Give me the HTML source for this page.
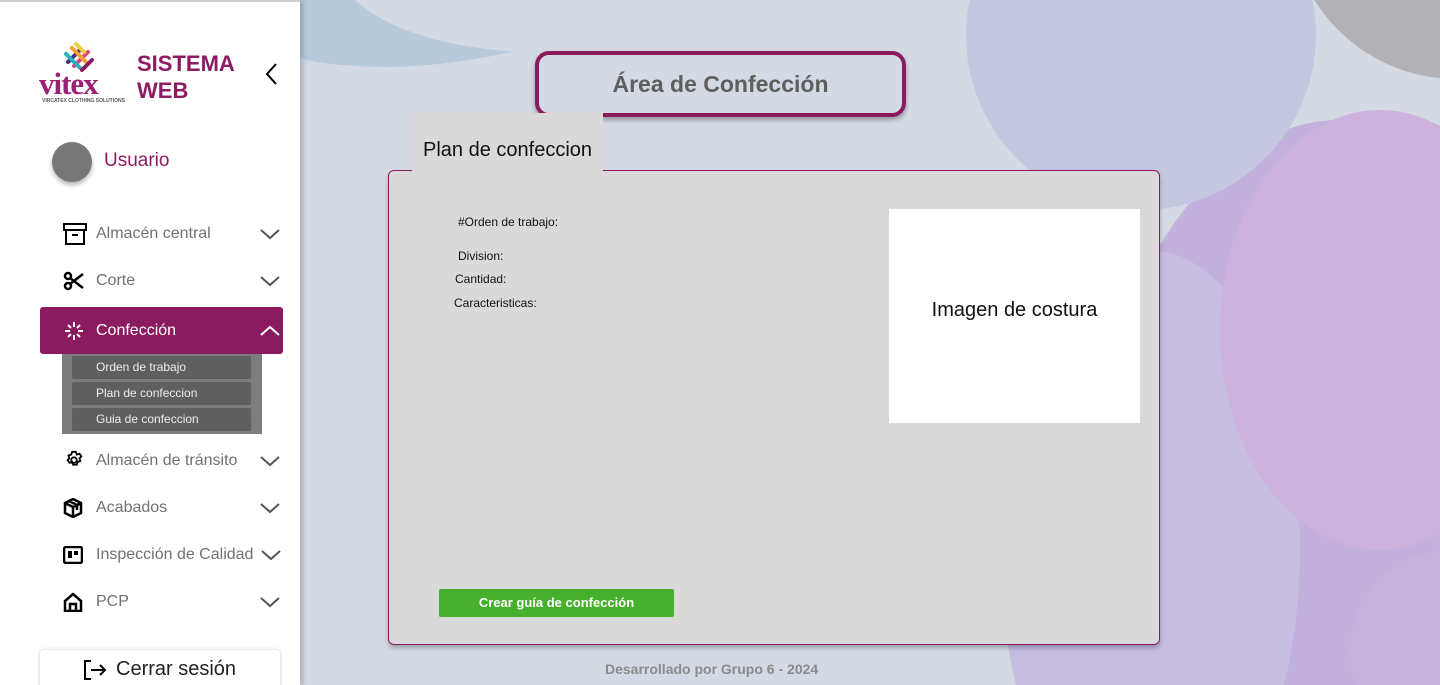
<!DOCTYPE html>
<html><head><meta charset="utf-8"><style>
*{margin:0;padding:0;box-sizing:border-box}
html,body{width:1440px;height:685px;overflow:hidden}
body{position:relative;font-family:"Liberation Sans",sans-serif;background:#d3dae3}
.bg{position:absolute;inset:0;overflow:hidden}
.b{position:absolute;border-radius:50%}
.side{position:absolute;left:0;top:0;width:300px;height:685px;background:#fff;border-top:2px solid #cfcfcf;box-shadow:2px 0 6px rgba(0,0,0,.25);z-index:5;overflow:hidden}
.item{position:absolute;left:40px;width:243px;height:47px;display:flex;align-items:center;color:#707070;font-size:16px}
.item svg.ic{position:absolute;left:23px}
.item span{position:absolute;left:56px}
.item .ch{position:absolute;left:220px}
.sub{position:absolute;left:62px;top:352px;width:200px;height:80px;background:#7d7d7d}
.sub div{position:absolute;left:10px;width:179px;height:23px;background:#5f5f5f;color:#eee;font-size:12px;line-height:23px;padding-left:24px;border-radius:2px}
</style></head><body>
<div class="bg">
<div class="b" style="left:200px;top:-170px;width:520px;height:230px;background:#b7cadc;transform:rotate(-10deg)"></div>
<div class="b" style="left:330px;top:-190px;width:520px;height:240px;background:#d3dae3;transform:rotate(-6deg)"></div>
<div class="b" style="left:1080px;top:120px;width:520px;height:900px;background:#c2b0de"></div>
<div class="b" style="left:1000px;top:250px;width:300px;height:600px;background:#c6bde0"></div>
<div class="b" style="left:966px;top:-140px;width:350px;height:350px;background:#c5c6e0"></div>
<div class="b" style="left:1290px;top:-250px;width:320px;height:330px;background:#b2b2b6;transform:rotate(-30deg)"></div>
<div class="b" style="left:1220px;top:110px;width:320px;height:440px;background:#cdb2dd"></div>
<div class="b" style="left:1350px;top:550px;width:200px;height:200px;background:#c4b4dc"></div>
</div>

<div class="side">
<svg style="position:absolute;left:62px;top:40px" width="34" height="32" viewBox="0 0 34 32">
<g stroke-width="4" stroke-linecap="round">
<line x1="6" y1="20" x2="18" y2="8" stroke="#4a2a7a"/><line x1="12" y1="24" x2="26" y2="10" stroke="#e0457b"/>
<line x1="10" y1="6" x2="26" y2="22" stroke="#f0a030"/><line x1="4" y1="12" x2="18" y2="26" stroke="#2ab0c0"/>
<line x1="14" y1="2" x2="22" y2="10" stroke="#e8d040"/><line x1="20" y1="28" x2="30" y2="18" stroke="#8a1a5e"/>
</g></svg>
<div style="position:absolute;left:39px;top:64px;font-family:'Liberation Serif',serif;font-weight:bold;font-size:31px;color:#9b1f73;letter-spacing:-1px">vitex</div>
<div style="position:absolute;left:42px;top:96px;font-size:5px;color:#555;font-weight:bold">VIRCATEX CLOTHING SOLUTIONS</div>
<div style="position:absolute;left:137px;top:48px;font-size:22px;font-weight:bold;color:#8c1b62;line-height:27px">SISTEMA<br>WEB</div>
<svg style="position:absolute;left:264px;top:60px" width="14" height="24"><path d="M12 2 L3 12 L12 22" fill="none" stroke="#000" stroke-width="2"/></svg>
<div style="position:absolute;left:52px;top:140px;width:40px;height:40px;border-radius:50%;background:#777;box-shadow:0 3px 5px rgba(0,0,0,.3)"></div>
<div style="position:absolute;left:104px;top:148px;font-size:19px;color:#8c1b62">Usuario</div>

<div class="item" style="top:208px"><svg class="ic" width="24" height="22" viewBox="0 0 24 22"><rect x="1" y="1" width="22" height="6" fill="none" stroke="#000" stroke-width="2"/><path d="M3 7v14h18V7M9 12h6" fill="none" stroke="#000" stroke-width="2"/></svg><span>Almacén central</span><svg class="ch" width="20" height="12"><path d="M1 2l9 8 9-8" fill="none" stroke="#555" stroke-width="2"/></svg></div>
<div class="item" style="top:255px"><svg class="ic" width="22" height="20" viewBox="0 0 22 20"><circle cx="5" cy="5" r="3" fill="none" stroke="#000" stroke-width="2.5"/><circle cx="5" cy="15" r="3" fill="none" stroke="#000" stroke-width="2.5"/><path d="M7 7l13 10M7 13L20 3" stroke="#000" stroke-width="2.5"/></svg><span>Corte</span><svg class="ch" width="20" height="12"><path d="M1 2l9 8 9-8" fill="none" stroke="#555" stroke-width="2"/></svg></div>
<div class="item" style="top:305px;background:#8a1b60;border-radius:3px;color:#fff;height:47px"><svg class="ic" width="22" height="22" viewBox="0 0 22 22"><g stroke="#fff" stroke-width="2"><path d="M11 2v5M11 15v5M2 11h5M15 11h5M5 5l3 3M14 14l3 3M17 5l-3 3M8 14l-3 3"/></g></svg><span>Confección</span><svg class="ch" width="20" height="12"><path d="M1 10l9-8 9 8" fill="none" stroke="#fff" stroke-width="2"/></svg></div>
<div class="sub"><div style="top:2px">Orden de trabajo</div><div style="top:28px">Plan de confeccion</div><div style="top:54px">Guia de confeccion</div></div>
<div class="item" style="top:435px"><svg class="ic" width="22" height="22" viewBox="0 0 24 24"><path d="M10 2h4l1 3 3-1 2 3-2 2 1 3-3 1-1 3h-4l-1-3-3 1-2-3 2-2-1-3 3-1z" fill="none" stroke="#000" stroke-width="2"/><circle cx="12" cy="11" r="3" fill="none" stroke="#000" stroke-width="2"/></svg><span>Almacén de tránsito</span><svg class="ch" width="20" height="12"><path d="M1 2l9 8 9-8" fill="none" stroke="#555" stroke-width="2"/></svg></div>
<div class="item" style="top:482px"><svg class="ic" width="20" height="20" viewBox="0 0 20 20"><path d="M10 1l8 4v10l-8 4-8-4V5z M2 5l8 4 8-4M10 9v10M6 3l8 4v5" fill="none" stroke="#000" stroke-width="2.5"/></svg><span>Acabados</span><svg class="ch" width="20" height="12"><path d="M1 2l9 8 9-8" fill="none" stroke="#555" stroke-width="2"/></svg></div>
<div class="item" style="top:529px"><svg class="ic" width="20" height="18" viewBox="0 0 20 18"><rect x="1" y="1" width="18" height="16" rx="2" fill="none" stroke="#000" stroke-width="2.5"/><rect x="5" y="5" width="4" height="7" fill="#000"/><rect x="11" y="5" width="4" height="4" fill="#000"/></svg><span>Inspección de Calidad</span><svg class="ch" style="left:221px" width="20" height="12"><path d="M1 2l9 8 9-8" fill="none" stroke="#555" stroke-width="2"/></svg></div>
<div class="item" style="top:576px"><svg class="ic" width="20" height="20" viewBox="0 0 20 20"><path d="M2 9l8-7 8 7v10H2z M7 19v-7h6v7" fill="none" stroke="#000" stroke-width="2.5"/></svg><span>PCP</span><svg class="ch" width="20" height="12"><path d="M1 2l9 8 9-8" fill="none" stroke="#555" stroke-width="2"/></svg></div>
<div style="position:absolute;left:40px;top:648px;width:240px;height:40px;background:#fff;box-shadow:0 0 4px rgba(0,0,0,.2);border-radius:4px"></div>
<svg style="position:absolute;left:83px;top:657px" width="24" height="22" viewBox="0 0 24 22"><path d="M8 2H2v18h6M8 11h14M17 6l5 5-5 5" fill="none" stroke="#000" stroke-width="2"/></svg>
<div style="position:absolute;left:116px;top:656px;font-size:20px;color:#222">Cerrar sesión</div>
</div>

<div style="position:absolute;left:535px;top:51px;width:371px;height:66px;border:4px solid #8a1b60;border-radius:14px;box-shadow:0 3px 5px rgba(0,0,0,.3);text-align:center;line-height:58px;font-size:23px;font-weight:bold;color:#5e5e5e">Área de Confección</div>

<div style="position:absolute;left:388px;top:170px;width:772px;height:475px;background:#d9d9d9;border:1px solid #8a1b60;border-radius:6px;box-shadow:0 3px 5px rgba(0,0,0,.25)"></div>
<div style="position:absolute;left:412px;top:113px;width:191px;height:59px;background:#d9d9d9;font-size:20px;color:#111;padding:26px 0 0 11px">Plan de confeccion</div>
<div style="position:absolute;left:458px;top:215px;font-size:12px;color:#111">#Orden de trabajo:</div>
<div style="position:absolute;left:458px;top:249px;font-size:12px;color:#111">Division:</div>
<div style="position:absolute;left:455px;top:272px;font-size:12px;color:#111">Cantidad:</div>
<div style="position:absolute;left:454px;top:296px;font-size:12px;color:#111">Caracteristicas:</div>
<div style="position:absolute;left:889px;top:209px;width:251px;height:214px;background:#fff;text-align:center;line-height:202px;font-size:20px;color:#111">Imagen de costura</div>
<div style="position:absolute;left:439px;top:589px;width:235px;height:28px;background:#46b02c;border-radius:2px;color:#fff;font-size:13px;font-weight:bold;text-align:center;line-height:28px">Crear guía de confección</div>
<div style="position:absolute;left:605px;top:661px;font-size:14px;font-weight:bold;color:#8a8a8a">Desarrollado por Grupo 6 - 2024</div>
</body></html>
